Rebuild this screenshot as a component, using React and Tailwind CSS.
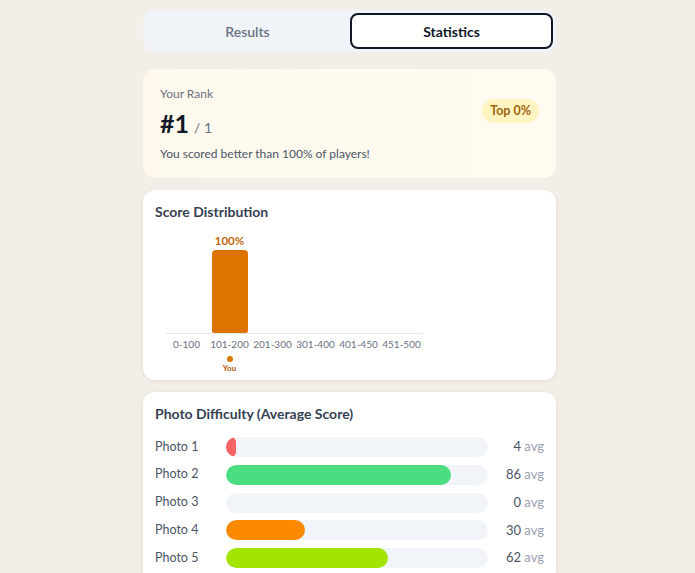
import React from "react";

const buckets = [
  { label: "0-100", pct: 0 },
  { label: "101-200", pct: 100, you: true },
  { label: "201-300", pct: 0 },
  { label: "301-400", pct: 0 },
  { label: "401-450", pct: 0 },
  { label: "451-500", pct: 0 },
];

const photos = [
  { name: "Photo 1", avg: 4, color: "bg-[#f56565]" },
  { name: "Photo 2", avg: 86, color: "bg-[#4ade80]" },
  { name: "Photo 3", avg: 0, color: "bg-[#4ade80]" },
  { name: "Photo 4", avg: 30, color: "bg-[#fb8a00]" },
  { name: "Photo 5", avg: 62, color: "bg-[#a3e400]" },
];

function Tabs() {
  return (
    <div className="grid grid-cols-2 gap-[1px] rounded-xl bg-[#f0f4f9] p-[3px] h-[42px]">
      <button className="rounded-lg text-[14px] font-semibold text-gray-500">Results</button>
      <button className="rounded-lg border-2 border-gray-900 bg-white text-[14px] font-bold text-gray-900">
        Statistics
      </button>
    </div>
  );
}

function RankCard() {
  return (
    <div className="flex items-start justify-between rounded-xl bg-gradient-to-r from-[#fef9ec] to-[#fffbf1] pl-[17px] pr-[17px] pt-[15px] pb-[14px]">
      <div>
        <div className="text-[12px] leading-5 text-gray-500">Your Rank</div>
        <div className="mt-[3px] flex items-baseline gap-[5px] leading-8">
          <span className="text-[25px] font-bold text-gray-900">#1</span>
          <span className="text-[14px] text-gray-500">/ 1</span>
        </div>
        <div className="text-[12px] leading-5 text-gray-600">You scored better than 100% of players!</div>
      </div>
      <div className="mt-[15px] rounded-full bg-[#fef5c3] px-[8px] py-[2px] text-[12.5px] font-bold leading-5 text-[#a1650a]">
        Top 0%
      </div>
    </div>
  );
}

function Distribution() {
  return (
    <div className="rounded-xl bg-white px-3 pt-3 pb-[6px] shadow-[0_1px_4px_rgba(0,0,0,0.08)]">
      <h3 className="text-[14px] font-bold leading-5 text-gray-700">Score Distribution</h3>
      <div className="ml-[10px] mt-[10px] w-[258px]">
        <div className="flex h-[102px] items-end border-b border-gray-200">
          {buckets.map((b) => (
            <div key={b.label} className="flex flex-1 flex-col items-center justify-end">
              {b.pct > 0 && (
                <>
                  <span className="text-[11.5px] font-bold leading-4 text-[#c2670a]">{b.pct}%</span>
                  <div
                    className="mt-[1px] w-[36px] rounded-t-[4px] rounded-b-[2px] bg-[#dd7300]"
                    style={{ height: `${(b.pct / 100) * 83}px` }}
                  />
                </>
              )}
            </div>
          ))}
        </div>
        <div className="flex">
          {buckets.map((b) => (
            <div key={b.label} className="flex flex-1 flex-col items-center">
              <span className="mt-[2px] text-[10px] leading-4 text-gray-500">{b.label}</span>
              {b.you && (
                <>
                  <span className="mt-[4px] h-[6px] w-[6px] rounded-full bg-[#d97706]" />
                  <span className="text-[8px] font-bold leading-3 text-[#b45309]">You</span>
                </>
              )}
            </div>
          ))}
        </div>
      </div>
    </div>
  );
}

function Difficulty() {
  return (
    <div className="rounded-xl bg-white px-3 pt-3 pb-4 shadow-[0_1px_4px_rgba(0,0,0,0.08)]">
      <h3 className="text-[14px] font-bold leading-5 text-gray-700">Photo Difficulty (Average Score)</h3>
      <div className="mt-[13px] flex flex-col gap-[7.75px]">
        {photos.map((p) => (
          <div key={p.name} className="flex h-5 items-center">
            <span className="w-[71px] text-[12.5px] text-gray-600">{p.name}</span>
            <div className="h-5 flex-1 overflow-hidden rounded-full bg-[#f1f4f9]">
              {p.avg > 0 && (
                <div className={`h-full rounded-full ${p.color}`} style={{ width: `${p.avg}%` }} />
              )}
            </div>
            <span className="w-[56px] text-right text-[13px] text-gray-600">
              {p.avg} <span className="text-gray-400">avg</span>
            </span>
          </div>
        ))}
      </div>
    </div>
  );
}

export default function App() {
  return (
    <div className="min-h-[573px] bg-[#f3eee7] pl-[4px]" style={{ fontFamily: 'Lato, "Open Sans", sans-serif' }}>
      <div className="mx-auto flex w-[413px] flex-col gap-3 pt-[10px]">
        <Tabs />
        <div className="mt-[5px]">
          <RankCard />
        </div>
        <Distribution />
        <Difficulty />
      </div>
    </div>
  );
}
